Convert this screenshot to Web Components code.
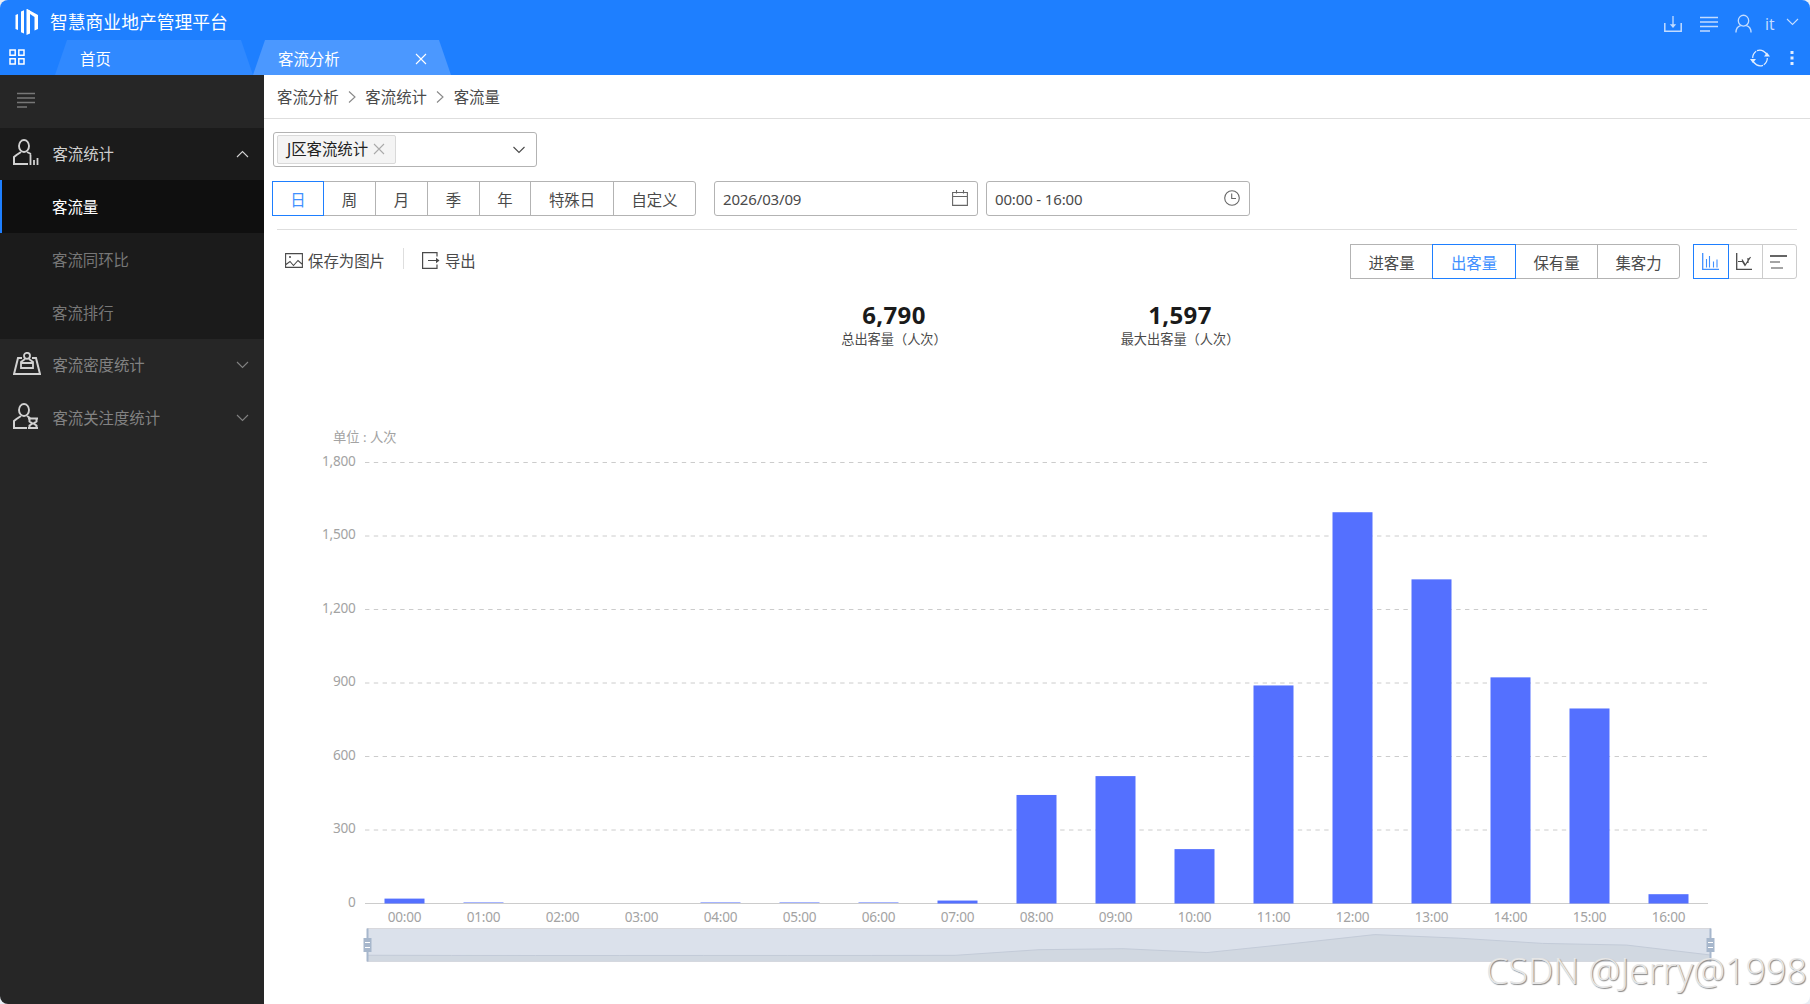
<!DOCTYPE html>
<html lang="zh-CN">
<head>
<meta charset="utf-8">
<title>智慧商业地产管理平台</title>
<style>
  html, body { margin: 0; height: 100%; overflow: hidden; background: #e9eef5; }
  body {
    font-family: "Noto Sans", "Noto Sans CJK SC", sans-serif;
    font-size: 15.4px;
    color: #4a4a4a;
  }
</style>
</head>
<body>
<app-shell></app-shell>

<script>
const ICONS = {
  logo: ['0 0 24 26', '<g fill="#fff"><path d="M.5 6l2.500-1v16l-2.500-1z"/><path d="M6 2.500l3-1.300v23.300l-3-1.300z"/><path d="M11.500 0l3.500 1.500v23l-3.500 1.500z"/><path d="M12 0l11 6v14l-3.500 1.500V8L12 3z"/></g>'],
  grid: ['0 0 16 16', '<path d="M1 1h5.200v5.200H1zM9.800 1H15v5.200H9.800zM1 9.800h5.200V15H1zM9.800 9.800H15V15H9.800z" stroke-width="1.500"/>'],
  download: ['0 0 18 18', '<path d="M.8 8v8.200h16.400V8" stroke-width="1.500"/><path d="M9 1v9" stroke-width="1.300"/><path d="M5.800 9.300h6.400L9 13z" fill="currentColor" stroke="none"/>'],
  lines: ['0 0 18 16', '<path d="M0 1.500h18M0 6h18M0 10.500h18M0 15h10" stroke-width="1.500"/>'],
  user: ['0 0 18 19', '<ellipse cx="9" cy="6.500" rx="5.500" ry="5.700" stroke-width="1.400"/><path d="M1 19c0-4 2-6.500 5-7.300M17 19c0-4-2-6.500-5-7.300" stroke-width="1.400"/>'],
  down: ['0 0 12 8', '<path d="M.5 1L6 6.500 11.500 1"/>'],
  up: ['0 0 12 8', '<path d="M.5 7L6 1.500 11.500 7"/>'],
  right: ['0 0 8 12', '<path d="M1 .5l6 5.500-6 5.500"/>'],
  close: ['0 0 12 12', '<path d="M1 1l10 10M11 1L1 11"/>'],
  refresh: ['0 0 20 18', '<path d="M7 1.700A7.700 7.700 0 0 1 17.300 7M13 16.300A7.700 7.700 0 0 1 2.700 11" stroke-width="1.400"/><path d="M6.200 2.200A8 8 0 0 0 2.700 9M13.800 15.700A8 8 0 0 0 17.300 9" stroke-width="1.200"/><path d="M0 10h6l-3.200 4zM14 7.500h6l-3-4z" fill="currentColor" stroke="none"/>'],
  more: ['0 0 4 14', '<path d="M.5 0h3v3h-3zM.5 5.500h3v3h-3zM.5 11h3v3h-3z" fill="currentColor" stroke="none"/>'],
  personBars: ['0 0 26 27', '<ellipse cx="11" cy="7" rx="5" ry="6" stroke-width="1.900"/><path d="M8 13l-4.500 3L1 18v7h14" stroke-width="2"/><path d="M14 13l4 2M17.500 15.500V26M21 21v5M24.500 19v7" stroke-width="1.800"/>'],
  density: ['0 0 28 24', '<path d="M9 6H5L1 22h26L23 6h-4" stroke-width="2"/><circle cx="14" cy="3.800" r="3" stroke-width="1.800"/><path d="M12 7L8 10v6h12v-6l-4-3M8 11h12" stroke-width="1.800"/>'],
  personGlass: ['0 0 26 27', '<ellipse cx="11" cy="7" rx="5" ry="6" stroke-width="1.900"/><path d="M8 13l-4.500 3L1 18v7h13" stroke-width="2"/><path d="M14 13l3 2M15 15.500h10M15 25h10M16.500 15.500v3l3 2-3 2V25M23.500 15.500v3l-3 2 3 2V25" stroke-width="2"/>'],
  image: ['0 0 18 15', '<path d="M.6.6h16.800v13.800H.6zM1 11.500l4-3 3.500 4 4.500-5 4.500 4"/><circle cx="5" cy="4" r="1" fill="currentColor" stroke="none"/>'],
  exportOut: ['0 0 18 17', '<path d="M15 4.500V.6H.6v15.800H15V12.500M6 8.500h10" stroke-width="1.200"/><path d="M14 5.700l3.500 2.800L14 11.300z" fill="currentColor" stroke="none"/>'],
  calendar: ['0 0 16 16', '<path d="M.6 2.500h14.800v12.900H.6zM.6 6.500h14.800M4.500 0v3.500M11.500 0v3.500"/>'],
  clock: ['0 0 16 16', '<circle cx="8" cy="8" r="7.300"/><path d="M7.700 3.500v5H12"/>'],
  bars: ['0 0 17 17', '<path d="M.7 0v16.300H17" stroke-width="1.300"/><path d="M4.500 6v8.500M7.500 3v11.500M11.500 8.500v6M15 6.500v8"/>'],
  trend: ['0 0 17 17', '<path d="M.7 0v16.300H16" stroke-width="1.300"/><path d="M2 8.500h4.500l2.500 4L14.500 4M6 6.500l3 5M12 10V5" stroke-width="1.200"/>'],
  rows: ['0 0 17 14', '<path d="M0 1h17" stroke-width="1.700"/><path d="M0 7h10M1 13h12" stroke-width="1.200"/>']
};

class UiIcon extends HTMLElement {
  constructor() {
    super();
    this.attachShadow({ mode: 'open' });
  }

  connectedCallback() {
    const [box, body] = ICONS[this.getAttribute('name')];
    const [, , w, h] = box.split(' ');
    this.shadowRoot.innerHTML = `
      <style>
        :host { display: inline-flex; flex: none; }
        svg { display: block; fill: none; stroke: currentColor; stroke-width: 1.1; }
        [fill="#fff"] { stroke: none; }
      </style>
      <svg width="${this.getAttribute('w') || w}" height="${this.getAttribute('h') || h}" viewBox="${box}">${body}</svg>`;
  }
}
customElements.define('ui-icon', UiIcon);

class TopBar extends HTMLElement {
  constructor() {
    super();
    this.attachShadow({ mode: 'open' }).innerHTML = `
      <style>
        :host { display: flex; flex-direction: column; height: 75px; background: #1e7fff; color: #fff; }
        .line { display: flex; align-items: center; height: 40px; padding: 4px 11px 0 15px; box-sizing: border-box; }
        h1 { margin: -1px 0 0 11px; font-size: 17.8px; line-height: 24px; font-weight: 400; flex: 1; }
        .tools { display: flex; align-items: center; color: #c3dcff; padding-top: 4px; }
        .tabs { display: flex; height: 35px; align-items: center; }
        .tabs > ui-icon:first-child { margin: -2px 29px 0 9px; }
        .tab {
          display: flex; align-items: center; justify-content: space-between;
          box-sizing: border-box; width: 198px; height: 35px; padding: 1px 24px 0 25px;
          background: #3089ff; clip-path: polygon(12px 0, 186px 0, 100% 100%, 0 100%);
        }
        .tab:nth-child(2) { margin-left: 1px; }
        .tab.on { background: #4b98ff; }
        .tab ui-icon { margin-top: 2px; }
        .end { margin-left: auto; display: flex; align-items: center; gap: 20px; padding-right: 16px; color: #e2eeff; }
      </style>
      <div class="line">
        <ui-icon name="logo"></ui-icon>
        <h1>智慧商业地产管理平台</h1>
        <div class="tools">
          <ui-icon name="download" style="margin-right:18px"></ui-icon>
          <ui-icon name="lines" style="margin-right:17px;margin-top:-1px"></ui-icon>
          <ui-icon name="user" w="17" h="19" style="margin-right:13px;margin-top:-1px"></ui-icon>
          <span style="width:21px">it</span>
          <ui-icon name="down" w="13" h="8" style="margin-top:-5px"></ui-icon>
        </div>
      </div>
      <div class="tabs">
        <ui-icon name="grid"></ui-icon>
        <div class="tab"><span>首页</span></div>
        <div class="tab on"><span>客流分析</span><ui-icon name="close"></ui-icon></div>
        <div class="end">
          <ui-icon name="refresh"></ui-icon>
          <ui-icon name="more"></ui-icon>
        </div>
      </div>`;
  }
}
customElements.define('top-bar', TopBar);

class MenuItem extends HTMLElement {
  constructor() {
    super();
    this.attachShadow({ mode: 'open' });
  }

  connectedCallback() {
    const icon = this.getAttribute('icon');
    const arrow = this.getAttribute('arrow');
    this.shadowRoot.innerHTML = `
      <style>
        :host { display: flex; align-items: center; height: 53px; box-sizing: border-box; padding: 0 15px 2px 13px; color: #828282; }
        :host([sub]) { padding: 0 0 0 52px; color: #777; }
        :host([open]) { color: #d0d0d0; height: 52px; padding-bottom: 1px; }
        :host([active]) { padding-left: 50px; background: #0f0f0f; color: #fff; border-left: 2px solid #1e7fff; }
        .icon { width: 39px; display: flex; color: #d2d2d2; padding-bottom: 2px; margin-right: .4px; }
        .text { flex: 1; }
      </style>
      ${icon ? `<span class="icon"><ui-icon name="${icon}"></ui-icon></span>` : ''}
      <span class="text"><slot></slot></span>
      ${arrow ? `<ui-icon name="${arrow}" w="13"></ui-icon>` : ''}`;
  }
}
customElements.define('menu-item', MenuItem);

class SideMenu extends HTMLElement {
  constructor() {
    super();
    this.attachShadow({ mode: 'open' }).innerHTML = `
      <style>
        :host { display: block; width: 264px; flex: none; background: #262626; }
        .toggle { display: flex; align-items: center; height: 53px; padding: 0 0 3px 17px; color: #777; box-sizing: border-box; }
        .group { background: #1b1b1b; }
      </style>
      <div class="toggle"><ui-icon name="lines"></ui-icon></div>
      <div class="group">
        <menu-item icon="personBars" arrow="up" open>客流统计</menu-item>
        <menu-item sub active>客流量</menu-item>
        <menu-item sub>客流同环比</menu-item>
        <menu-item sub>客流排行</menu-item>
      </div>
      <menu-item icon="density" arrow="down">客流密度统计</menu-item>
      <menu-item icon="personGlass" arrow="down">客流关注度统计</menu-item>`;
  }
}
customElements.define('side-menu', SideMenu);

// Row of joined buttons; items="a:width,b:width", "icon/" prefix draws an icon
class ButtonGroup extends HTMLElement {
  constructor() {
    super();
    this.attachShadow({ mode: 'open' });
  }

  connectedCallback() {
    const active = Number(this.getAttribute('active'));
    const items = this.getAttribute('items').split(',').map((it, i) => {
      const [label, width] = it.split(':');
      const body = label.startsWith('icon/') ? `<ui-icon name="${label.slice(5)}"></ui-icon>` : label;
      return `<span class="${i === active ? 'on' : ''}" style="width:${width}px">${body}</span>`;
    });
    this.shadowRoot.innerHTML = `
      <style>
        :host { display: flex; height: 35px; }
        span {
          display: flex; align-items: center; justify-content: center; box-sizing: border-box;
          border: 1px solid var(--line, #b3b3b3); margin-right: -1px; padding-top: 2px;
        }
        :host([icons]) span { padding: 0 2px 0 0; }
        span:first-child { border-radius: 3px 0 0 3px; }
        span:last-child { border-radius: 0 3px 3px 0; margin-right: 0; }
        .on { border-color: #1e7fff; color: #4090ff; z-index: 1; }
      </style>
      ${items.join('')}`;
  }
}
customElements.define('button-group', ButtonGroup);

class FieldBox extends HTMLElement {
  constructor() {
    super();
    this.attachShadow({ mode: 'open' }).innerHTML = `
      <style>
        :host {
          display: flex; align-items: center; justify-content: space-between; box-sizing: border-box;
          width: 264px; height: 35px; border: 1px solid #b3b3b3; border-radius: 3px;
          padding: 0 9px 0 8px; font-size: 15px; letter-spacing: -.15px;
        }
        ui-icon { color: #666; margin-top: -2px; }
      </style>
      <slot></slot>
      <ui-icon name="${this.getAttribute('icon')}"></ui-icon>`;
  }
}
customElements.define('field-box', FieldBox);

class TagSelect extends HTMLElement {
  constructor() {
    super();
    this.attachShadow({ mode: 'open' }).innerHTML = `
      <style>
        :host {
          display: flex; align-items: center; justify-content: space-between; box-sizing: border-box;
          width: 264px; height: 35px; border: 1px solid #b3b3b3; border-radius: 3px; padding: 0 11px 0 3px;
        }
        .tag {
          display: flex; align-items: center; gap: 5px; box-sizing: border-box; height: 29px; padding: 0 10px 2px 9px;
          background: #f4f4f4; border: 1px solid #d9d9d9; border-radius: 2px; color: #222;
        }
        .tag ui-icon { color: #aaa; }
      </style>
      <span class="tag"><slot></slot><ui-icon name="close"></ui-icon></span>
      <ui-icon name="down"></ui-icon>`;
  }
}
customElements.define('tag-select', TagSelect);

class StatFigure extends HTMLElement {
  constructor() {
    super();
    this.attachShadow({ mode: 'open' }).innerHTML = `
      <style>
        :host { display: flex; flex-direction: column; align-items: center; width: 286px; }
        b { font-size: 24px; line-height: 30px; letter-spacing: .35px; color: #1a1a1a; }
        span { font-size: 13.2px; line-height: 18px; }
      </style>
      <b>${this.getAttribute('value')}</b>
      <span><slot></slot></span>`;
  }
}
customElements.define('stat-figure', StatFigure);

class FlowChart extends HTMLElement {
  constructor() {
    super();
    this.attachShadow({ mode: 'open' });
  }

  connectedCallback() {
    const values = this.getAttribute('values').split(',').map(Number);
    const left = 101, right = 1444, base = 493.5, top = 52.5, max = 1800;
    const step = (right - left) / values.length;
    const y = v => base - (base - top) * v / max;

    let grid = '';
    for (let v = 0; v <= max; v += 300) {
      grid += v ? `<path class="dash" d="M${left} ${y(v)}H${right}"/>` : '';
      grid += `<text x="91.500" y="${y(v) + 3}" text-anchor="end">${v.toLocaleString('en-US')}</text>`;
    }

    const bars = values.map((v, i) => {
      const cx = left + step * (i + .5);
      const thin = v && v < 8;
      const bar = v ? `<rect class="${thin ? 'thin' : 'bar'}" x="${cx - 20}" y="${thin ? base - 1.5 : y(v)}" width="40" height="${thin ? 1 : base - y(v)}"/>` : '';
      return `${bar}<text x="${cx}" y="512" text-anchor="middle">${String(i).padStart(2, '0')}:00</text>`;
    }).join('');

    // range slider under the axis: shadow line is a scaled copy of the data
    const sl = 103.5, sr = 1446.5, st = 518.5, sb = 551.5;
    const pts = values.map((v, i) => `${sl + (sr - sl) * i / (values.length - 1)} ${sb - 6 - v * .0131}`).join('L');
    const handle = x => `
      <path d="M${x} ${st}V${sb}" stroke="#a7b7cc" stroke-width="2"/>
      <rect x="${x - 4}" y="528" width="8" height="14" fill="#a7b7cc"/>
      <path d="M${x - 2.5} 532.5h5M${x - 2.5} 537.5h5" stroke="#fff"/>`;

    this.shadowRoot.innerHTML = `
      <style>
        :host { display: block; }
        svg { display: block; overflow: visible; }
        text { font-size: 13.6px; letter-spacing: -.25px; fill: #a3a3a3; }
        .unit { font-size: 13.3px; letter-spacing: 0; }
        .dash { stroke: #ccc; stroke-dasharray: 4.4 4.4; }
        .bar { fill: #5470ff; }
        .thin { fill: #a5b4ff; }
      </style>
      <svg width="1546" height="560">
        <text class="unit" x="69" y="32">单位 : 人次</text>
        <path d="M${left} ${base}H${right}" stroke="#ccc"/>
        ${grid}${bars}
        <rect x="${sl}" y="${st}" width="${sr - sl}" height="${sb - st}" fill="#dbe1eb" stroke="#d8d8dc"/>
        <path d="M${sl} ${sb}L${pts}L${sr} ${sb}z" fill="#d1d8e1"/>
        <path d="M${pts}" fill="none" stroke="#c3cbd8"/>
        ${handle(sl)}${handle(sr)}
      </svg>`;
  }
}
customElements.define('flow-chart', FlowChart);

class FlowPage extends HTMLElement {
  constructor() {
    super();
    this.attachShadow({ mode: 'open' }).innerHTML = `
      <style>
        :host { display: flex; flex-direction: column; flex: 1; background: #fff; }
        .crumbs { display: flex; align-items: center; gap: 9.4px; height: 43px; padding-left: 13px; border-bottom: 1px solid #dedede; }
        .crumbs ui-icon { color: #888; }
        tag-select { margin: 13px 0 0 9px; }
        .filters { display: flex; height: 35px; margin: 14px 0 0 8px; }
        .filters button-group { margin-right: 18px; }
        .filters field-box + field-box { margin-left: 8px; }
        .actions { display: flex; height: 35px; margin: 13px 13px 0 13px; padding: 14px 0 0 8px; border-top: 1px solid #dedede; }
        .act { display: flex; align-items: center; gap: 5px; height: 33px; }
        .bar { width: 1px; height: 21px; margin: 4px 18px 0; background: #dedede; }
        .metric { margin-left: auto; margin-right: 13px; }
        .stats { display: flex; justify-content: center; height: 48px; margin: 21px 0 0; }
        flow-chart { margin-top: 62px; }
      </style>
      <div class="crumbs">
        <span>客流分析</span><ui-icon name="right"></ui-icon>
        <span>客流统计</span><ui-icon name="right"></ui-icon>
        <span>客流量</span>
      </div>
      <tag-select>J区客流统计</tag-select>
      <div class="filters">
        <button-group active="0" items="日:52,周:53,月:53,季:53,年:52,特殊日:84,自定义:83"></button-group>
        <field-box icon="calendar">2026/03/09</field-box>
        <field-box icon="clock">00:00 - 16:00</field-box>
      </div>
      <div class="actions">
        <span class="act"><ui-icon name="image"></ui-icon>保存为图片</span>
        <i class="bar"></i>
        <span class="act"><ui-icon name="exportOut"></ui-icon>导出</span>
        <button-group class="metric" active="1" items="进客量:83,出客量:84,保有量:83,集客力:83"></button-group>
        <button-group icons active="0" style="--line:#ccc" items="icon/bars:36,icon/trend:35,icon/rows:35"></button-group>
      </div>
      <div class="stats">
        <stat-figure value="6,790">总出客量（人次）</stat-figure>
        <stat-figure value="1,597">最大出客量（人次）</stat-figure>
      </div>
      <flow-chart values="20,4,0,0,3,3,3,12,443,520,222,890,1597,1323,923,796,38"></flow-chart>`;
  }
}
customElements.define('flow-page', FlowPage);

class AppShell extends HTMLElement {
  constructor() {
    super();
    this.attachShadow({ mode: 'open' }).innerHTML = `
      <style>
        :host { display: flex; flex-direction: column; height: 100vh; border-radius: 8px; overflow: hidden; position: relative; }
        .body { display: flex; flex: 1; min-height: 0; }
        .mark {
          position: absolute; right: 3px; bottom: 11px; font: 300 35.9px/44px "Open Sans", sans-serif;
          color: #e6e6e6; white-space: nowrap; text-shadow: 1px 1px 1px #888;
        }
      </style>
      <top-bar></top-bar>
      <div class="body">
        <side-menu></side-menu>
        <flow-page></flow-page>
      </div>
      <div class="mark">CSDN @Jerry@1998</div>`;
  }
}
customElements.define('app-shell', AppShell);
</script>
</body>
</html>
